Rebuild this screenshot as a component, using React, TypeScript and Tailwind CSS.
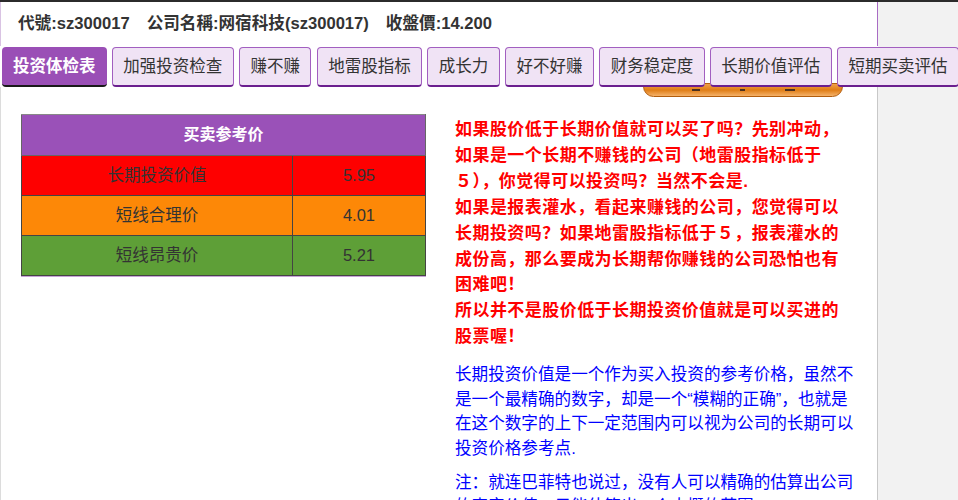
const tabs = [
  "加强投资检查",
  "赚不赚",
  "地雷股指标",
  "成长力",
  "好不好赚",
  "财务稳定度",
  "长期价值评估",
  "短期买卖评估",
];

const rows = [
  { label: "长期投资价值", value: "5.95", bg: "bg-[#fe0000]" },
  { label: "短线合理价", value: "4.01", bg: "bg-[#fd8807]" },
  { label: "短线昂贵价", value: "5.21", bg: "bg-[#5e9f37]" },
];

export default function App() {
  return (
    <div className="w-[958px] h-[500px] overflow-hidden border-t-2 border-[#2b2b2b] bg-[#f2f2f2] font-['Liberation_Sans','Noto_Sans_CJK_SC',sans-serif] text-[#333]">
      <div className="relative w-[878px] h-[498px] bg-white">
        {/* header */}
        <div className="h-[44px] flex items-center gap-[17px] pl-[17px] border-l border-r border-l-[#d9c3e3] border-r-[#a86bc4] text-[16.6px] font-bold">
          <span>代號:sz300017</span>
          <span>公司名稱:网宿科技(sz300017)</span>
          <span>收盤價:14.200</span>
        </div>

        {/* orange button peeking out under the tabs */}
        <div className="absolute left-[643px] top-[81px] w-[200px] h-[14px] rounded-b-[12px] rounded-t-[4px] border border-[#b35d0c] bg-[linear-gradient(to_bottom,#f0a048,#e07d16_50%,#f5b26a)] flex justify-center gap-[40px] pt-[5px]">
          <div className="w-[8px] h-[2px] bg-[#4a3020]" />
          <div className="w-[5px] h-[2px] bg-[#4a3020]" />
          <div className="w-[10px] h-[2px] bg-[#4a3020]" />
        </div>

        {/* tabs */}
        <div className="relative z-10 w-max flex gap-[5.4px] pl-[2px] pt-px h-[41px]">
          <div className="h-[40px] px-[11px] flex items-center rounded-[4px] bg-[#9a4fb6] border-b-2 border-[#1a1a1a] text-white font-bold text-[16.5px]">
            投资体检表
          </div>
          {tabs.map((t) => (
            <div
              key={t}
              className="h-[40px] px-[10.4px] flex items-center rounded-[4px] bg-[#f0e3f5] border border-[#a25fc0] border-b-2 border-b-[#6b1f8f] text-[16.5px] text-[#333]"
            >
              {t}
            </div>
          ))}
        </div>

        {/* content */}
        <div className="h-[416px] flex gap-[29px] pt-[27px] pl-[20px] border-l border-r border-l-[#dcdcdc] border-r-[#c8c8c8]">
          <div className="w-[405px] shrink-0">
            <table className="w-full border-collapse border border-[#555] text-[16.5px]">
              <thead>
                <tr>
                  <th
                    colSpan={2}
                    className="h-[41px] bg-[#9a51b8] text-white font-bold text-[16px] border border-[#666] border-t-[#888]"
                  >
                    买卖参考价
                  </th>
                </tr>
              </thead>
              <tbody>
                {rows.map((r) => (
                  <tr key={r.label} className={r.bg}>
                    <td className="h-[40px] w-[271px] text-center border border-[#444]">{r.label}</td>
                    <td className="h-[40px] text-center border border-[#444]">{r.value}</td>
                  </tr>
                ))}
              </tbody>
            </table>
            <div className="h-px bg-[#c8a2d8]" />
          </div>

          <div className="w-[400px] shrink-0 pt-[3px]">
            <p className="text-[#ff0000] font-bold text-[17px] tracking-[0.45px] leading-[25.9px]">
              如果股价低于长期价值就可以买了吗？先别冲动，
              <br />
              如果是一个长期不赚钱的公司（地雷股指标低于５），你觉得可以投资吗？当然不会是.
              <br />
              如果是报表灌水，看起来赚钱的公司，您觉得可以长期投资吗？如果地雷股指标低于５，报表灌水的成份高，那么要成为长期帮你赚钱的公司恐怕也有困难吧！
              <br />
              所以并不是股价低于长期投资价值就是可以买进的股票喔！
            </p>
            <p className="mt-[13px] text-[#0000ff] text-[16.6px] leading-[24.6px]">
              长期投资价值是一个作为买入投资的参考价格，虽然不是一个最精确的数字，却是一个“模糊的正确”，也就是在这个数字的上下一定范围内可以视为公司的长期可以投资价格参考点.
            </p>
            <p className="mt-[9px] text-[#0000ff] text-[16.6px] leading-[24.6px]">
              注：就连巴菲特也说过，没有人可以精确的估算出公司的真实价值，只能估算出一个大概的范围.
            </p>
          </div>
        </div>
      </div>
    </div>
  );
}
